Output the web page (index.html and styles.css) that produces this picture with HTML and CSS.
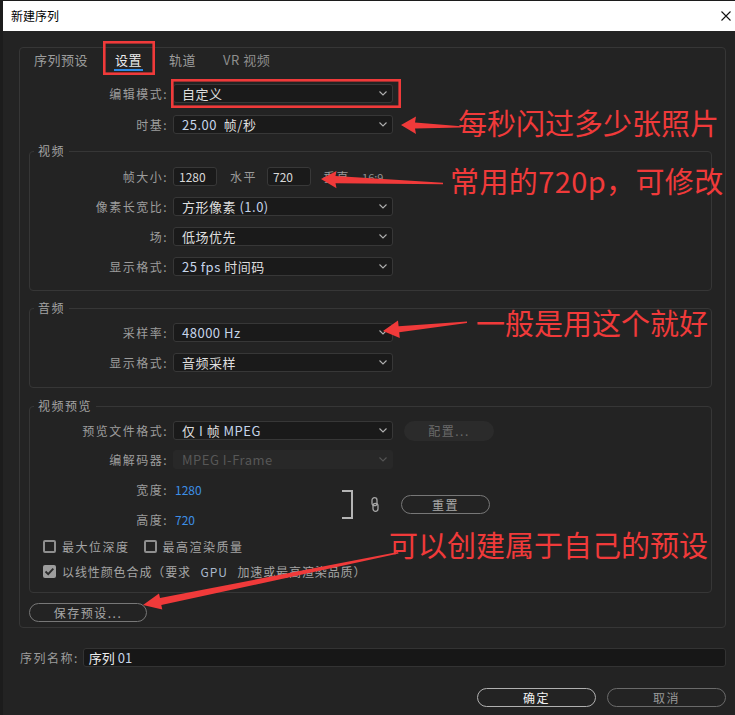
FILE: index.html
```html
<!DOCTYPE html>
<html lang="zh-CN">
<head>
<meta charset="utf-8">
<title>新建序列</title>
<link rel="stylesheet" href="styles.css">
</head>
<body>
<div class="dialog">
  <div class="titlebar">
    <span class="title">新建序列</span>
    <svg class="close" viewBox="0 0 10 10"><path d="M0.5 0.5L9.5 9.5M9.5 0.5L0.5 9.5" stroke="#111" stroke-width="1.1" fill="none"/></svg>
  </div>
  <div class="body">
    <div class="panel">
      <div class="tabs">
        <span class="tab">序列预设</span>
        <span class="tab active">设置</span>
        <span class="tab">轨道</span>
        <span class="tab vr">VR 视频</span>
      </div>

      <div class="top-rows">
        <div class="row"><span class="lbl">编辑模式:</span><div class="select"><span class="val">自定义</span><svg class="chev" viewBox="0 0 8 5"><polyline points="0.5,0.5 4,4 7.5,0.5"/></svg></div></div>
        <div class="row"><span class="lbl">时基:</span><div class="select"><span class="val"><span class="lat">25.00</span>&nbsp; 帧/秒</span><svg class="chev" viewBox="0 0 8 5"><polyline points="0.5,0.5 4,4 7.5,0.5"/></svg></div></div>
      </div>

      <div class="section video">
        <div class="legend">视频</div>
        <div class="rows">
          <div class="row"><span class="lbl">帧大小:</span><span class="field">1280</span><span class="sub first">水平</span><span class="field">720</span><span class="sub">垂直</span><span class="ratio">16:9</span></div>
          <div class="row"><span class="lbl">像素长宽比:</span><div class="select"><span class="val">方形像素 <span class="lat">(1.0)</span></span><svg class="chev" viewBox="0 0 8 5"><polyline points="0.5,0.5 4,4 7.5,0.5"/></svg></div></div>
          <div class="row"><span class="lbl">场:</span><div class="select"><span class="val">低场优先</span><svg class="chev" viewBox="0 0 8 5"><polyline points="0.5,0.5 4,4 7.5,0.5"/></svg></div></div>
          <div class="row"><span class="lbl">显示格式:</span><div class="select"><span class="val"><span class="lat">25 fps</span> 时间码</span><svg class="chev" viewBox="0 0 8 5"><polyline points="0.5,0.5 4,4 7.5,0.5"/></svg></div></div>
        </div>
      </div>

      <div class="section audio">
        <div class="legend">音频</div>
        <div class="rows">
          <div class="row"><span class="lbl">采样率:</span><div class="select"><span class="val"><span class="lat">48000 Hz</span></span><svg class="chev" viewBox="0 0 8 5"><polyline points="0.5,0.5 4,4 7.5,0.5"/></svg></div></div>
          <div class="row"><span class="lbl">显示格式:</span><div class="select"><span class="val">音频采样</span><svg class="chev" viewBox="0 0 8 5"><polyline points="0.5,0.5 4,4 7.5,0.5"/></svg></div></div>
        </div>
      </div>

      <div class="section preview">
        <div class="legend">视频预览</div>
        <div class="rows">
          <div class="row"><span class="lbl">预览文件格式:</span><div class="select"><span class="val">仅 <span class="lat">I</span> 帧 <span class="lat">MPEG</span></span><svg class="chev" viewBox="0 0 8 5"><polyline points="0.5,0.5 4,4 7.5,0.5"/></svg></div><span class="cfg">配置...</span></div>
          <div class="row"><span class="lbl">编解码器:</span><div class="select disabled"><span class="val">MPEG I-Frame</span><svg class="chev" viewBox="0 0 8 5"><polyline points="0.5,0.5 4,4 7.5,0.5"/></svg></div></div>
        </div>
        <div class="dims">
          <div class="dimcol">
            <div class="row"><span class="lbl">宽度:</span><span class="num">1280</span></div>
            <div class="row"><span class="lbl">高度:</span><span class="num">720</span></div>
          </div>
          <svg class="bracket" viewBox="0 0 12 29"><path d="M0 1H10V28H0" stroke="#b4b4b4" stroke-width="2" fill="none"/></svg>
          <svg class="chain" viewBox="0 0 8 15"><rect x="1" y="0.7" width="5" height="8" rx="2.5" stroke="#a6a6a6" stroke-width="1.3" fill="none"/><rect x="2" y="6.3" width="5" height="8" rx="2.5" stroke="#a6a6a6" stroke-width="1.3" fill="none"/></svg>
          <span class="pill reset">重置</span>
        </div>
        <div class="checks">
          <div class="check-row">
            <span class="check"><span class="box"></span>最大位深度</span>
            <span class="check"><span class="box"></span>最高渲染质量</span>
          </div>
          <div class="check-row">
            <span class="check tight"><span class="box on"><svg viewBox="0 0 13 13"><polyline points="2.5,6.5 5.2,9.2 10.3,3.6" stroke="#2b2b2b" stroke-width="1.9" fill="none"/></svg></span>以线性颜色合成（要求 <span class="lat">GPU</span> 加速或最高渲染品质）</span>
          </div>
        </div>
      </div>

      <span class="pill save">保存预设...</span>
    </div>

    <div class="name-row">
      <span class="name-lbl">序列名称:</span>
      <div class="name-input">序列 <span class="lat">01</span></div>
    </div>

    <div class="actions">
      <span class="pill ok">确定</span>
      <span class="pill cancel">取消</span>
    </div>
  </div>
</div>

<svg class="annot" viewBox="0 0 735 715">
  <g fill="none" stroke="#f03a3a" stroke-width="2.6">
    <rect x="104.3" y="42.3" width="49.4" height="31.4"/>
    <rect x="172.3" y="80.3" width="227.4" height="26.4"/>
  </g>
  <g fill="#f03a3a">
    <polygon points="401,125 416,116.5 415,122.5 461,126.3 461,127.6 415,128.6 416,134"/>
    <polygon points="321,179 336.5,171 335.5,176 443,182.8 443,184.2 335.5,183.2 336.5,188.3"/>
    <polygon points="383,331 398,320.6 398.6,326.3 467,321.4 467,322.9 399.2,332.3 399.8,338"/>
    <polygon points="143,605 159,593.4 160,598 398,552 398.6,553.6 161.3,605 162.3,609.6"/>
  </g>
</svg>
<div class="note n1">每秒闪过多少张照片</div>
<div class="note n2">常用的720p，可修改</div>
<div class="note n3">一般是用这个就好</div>
<div class="note n4">可以创建属于自己的预设</div>
</body>
</html>
```

FILE: styles.css
```css
* { box-sizing: border-box; }
html, body { margin: 0; }
body {
  width: 735px;
  height: 715px;
  overflow: hidden;
  position: relative;
  padding-top: 1px;
  background: #1c1c1c;
  font-family: "Noto Sans CJK SC", "Noto Sans", sans-serif;
}
.dialog {
  margin-left: 3px;
  height: 714px;
  display: flex;
  flex-direction: column;
}
.titlebar {
  flex: none;
  height: 30px;
  background: #ffffff;
  display: flex;
  align-items: center;
  padding: 0 4px 0 8px;
}
.title { font-size: 12px; line-height: 14px; color: #000; }
.close { margin-left: auto; width: 10px; height: 10px; }

.body {
  flex: 1;
  background: #232323;
  padding: 16px 9px 0 16px;
}
.panel {
  height: 581px;
  border: 1px solid #363636;
  border-radius: 4px;
  padding: 0 13px 0 9px;
}
.tabs {
  display: flex;
  gap: 25px;
  padding: 3px 0 0 4px;
}
.tab {
  font-size: 13px;
  line-height: 18px;
  letter-spacing: 0.5px;
  color: #9c9c9c;
  padding: 0 1px;
  border-bottom: 2px solid transparent;
}
.tab.active { color: #ececec; border-bottom-color: #2e8ae6; }
.tab.vr { color: #8e8e8e; }

.top-rows {
  margin-top: 13px;
  padding-left: 1px;
  display: flex;
  flex-direction: column;
  gap: 12px;
}
.row {
  display: flex;
  align-items: center;
  height: 19px;
}
.lbl {
  flex: none;
  width: 138px;
  margin-right: 5px;
  text-align: right;
  font-size: 12px;
  line-height: 19px;
  letter-spacing: 1.5px;
  color: #9d9d9d;
  white-space: nowrap;
}
.select {
  flex: none;
  width: 220px;
  height: 19px;
  background: #1a1a1a;
  border: 1px solid #373737;
  border-radius: 3px;
  display: flex;
  align-items: center;
  padding: 0 5px 0 8px;
  color: #dedede;
  font-size: 13px;
  line-height: 17px;
  letter-spacing: 0.5px;
  white-space: nowrap;
}
.select .val { flex: 1; }
.lat { color: #c6d5ea; }
.chev { width: 8px; height: 5px; fill: none; stroke: #b0b0b0; stroke-width: 1.1; }
.select.disabled { background: #282828; border-color: #282828; color: #575757; }
.select.disabled .chev { stroke: #555; }

.section {
  border: 1px solid #363636;
  border-radius: 4px;
  margin-top: 17px;
}
.legend {
  display: table;
  margin: -8px 0 0 4px;
  padding: 0 4px;
  background: #232323;
  font-size: 12px;
  line-height: 14px;
  letter-spacing: 1.5px;
  color: #a3a3a3;
}
.section .rows {
  display: flex;
  flex-direction: column;
  gap: 11px;
  margin-top: 8px;
}
.section.video { padding-bottom: 14px; }
.section.video .rows { margin-top: 9px; }
.section.audio { padding-bottom: 15px; }
.section.preview { margin-top: 18px; padding-bottom: 11px; }
.section.preview .rows { gap: 10px; }

.field {
  flex: none;
  width: 44px;
  height: 19px;
  background: #1a1a1a;
  border: 1px solid #383838;
  border-radius: 3px;
  padding-left: 5px;
  font-size: 12px;
  line-height: 17px;
  color: #d8d8d8;
}
.sub {
  margin: 0 0 0 12px;
  font-size: 12px;
  letter-spacing: 1.5px;
  color: #9a9a9a;
}
.sub.first { margin: 0 10px 0 13px; }
.ratio { margin-left: 12px; font-size: 11px; color: #8f8f8f; }

.cfg {
  margin-left: 11px;
  width: 90px;
  height: 20px;
  border-radius: 10px;
  background: #2b2b2b;
  color: #6a6a6a;
  font-size: 12px;
  letter-spacing: 1.5px;
  display: flex;
  align-items: center;
  justify-content: center;
}

.dims {
  display: flex;
  align-items: center;
  margin-top: 11px;
}
.dimcol {
  width: 312px;
  display: flex;
  flex-direction: column;
  gap: 11px;
}
.num { padding-left: 2px; font-size: 12px; color: #3d8fe6; }
.bracket { width: 12px; height: 29px; flex: none; }
.chain { width: 8px; height: 15px; margin-left: 17px; flex: none; }

.pill {
  display: flex;
  align-items: center;
  justify-content: center;
  height: 19px;
  border: 1.5px solid #777;
  border-radius: 10px;
  color: #a8a8a8;
  font-size: 12px;
  letter-spacing: 1.5px;
}
.reset { margin-left: 22px; width: 89px; }
.save { margin-top: 10px; width: 118px; }

.checks {
  margin-top: 8px;
  padding-left: 13px;
  display: flex;
  flex-direction: column;
  gap: 6px;
}
.check-row { display: flex; align-items: center; height: 19px; gap: 14px; }
.check {
  display: flex;
  align-items: center;
  gap: 6px;
  font-size: 12px;
  letter-spacing: 1.5px;
  color: #a5a5a5;
  white-space: pre;
}
.check.tight { letter-spacing: 0.9px; }
.check .lat { color: #a9b8cc; }
.box {
  flex: none;
  width: 13px;
  height: 13px;
  border: 2px solid #8f8f8f;
  border-radius: 2px;
}
.box.on { background: #9d9d9d; border: none; }
.box.on svg { width: 13px; height: 13px; display: block; }

.name-row {
  display: flex;
  align-items: center;
  height: 19px;
  margin-top: 20px;
  padding-left: 1px;
}
.name-lbl {
  font-size: 12px;
  letter-spacing: 1.5px;
  color: #9d9d9d;
  margin-right: 4px;
  white-space: nowrap;
}
.name-input {
  flex: 1;
  height: 19px;
  background: #171717;
  border: 1px solid #333;
  border-radius: 3px;
  padding-left: 5px;
  display: flex;
  align-items: center;
  font-size: 13px;
  color: #ececec;
  white-space: pre;
}

.actions {
  display: flex;
  justify-content: flex-end;
  gap: 11px;
  margin-top: 21px;
}
.ok { width: 119px; border-color: #b0b0b0; color: #f2f2f2; }
.cancel { width: 119px; border-color: #6a6a6a; color: #999; }

.annot {
  position: absolute;
  top: 0;
  left: 0;
  width: 735px;
  height: 715px;
  pointer-events: none;
}
.note {
  position: absolute;
  color: #f03a3a;
  font-size: 29px;
  line-height: 29px;
  white-space: nowrap;
  font-family: "Noto Sans CJK SC", sans-serif;
}
.n1 { left: 458px; top: 108px; }
.n2 { left: 450px; top: 166px; letter-spacing: 0.4px; }
.n3 { left: 476px; top: 308px; }
.n4 { left: 389px; top: 530px; }
```
